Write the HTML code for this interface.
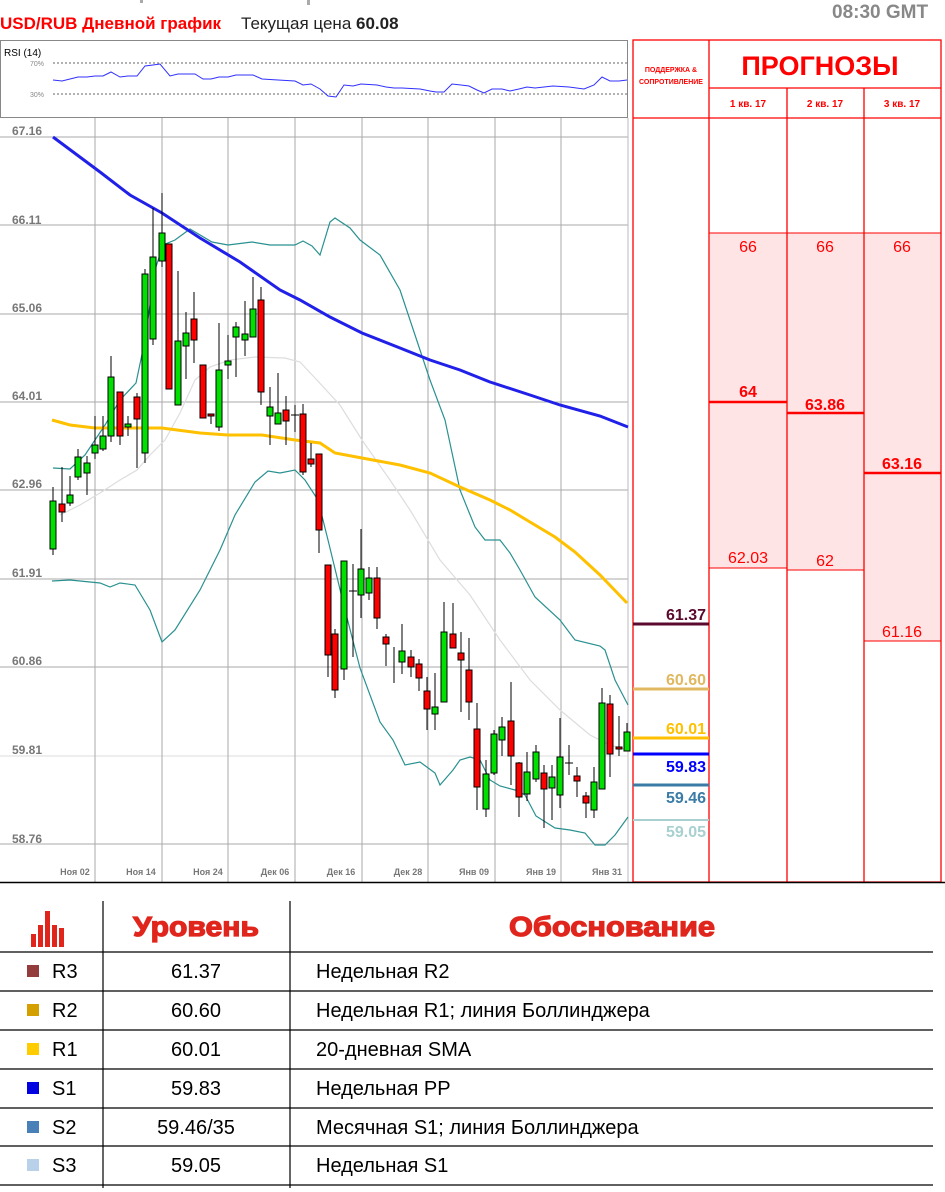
<!DOCTYPE html>
<html><head><meta charset="utf-8"><style>
*{margin:0;padding:0;box-sizing:border-box}
body{width:945px;height:1192px;background:#fff;font-family:"Liberation Sans","DejaVu Sans",sans-serif;position:relative;overflow:hidden}
.a{position:absolute}
</style></head><body>
<div class="a" style="left:832px;top:2px;font-size:19px;font-weight:bold;color:#888">08:30 GMT</div>
<div class="a" style="left:0;top:14px;font-size:17px;white-space:nowrap"><span style="color:#f00;font-weight:bold">USD/RUB Дневной график</span><span style="color:#222;margin-left:20px">Текущая цена <b>60.08</b></span></div>
<svg class="a" style="left:0;top:0" width="945" height="1192" xmlns="http://www.w3.org/2000/svg" font-family="Liberation Sans, sans-serif">
<rect x="140" y="0" width="3" height="3" fill="#aaa"/><rect x="307" y="0" width="3" height="5" fill="#aaa"/>
<rect x="0.5" y="40.5" width="627" height="77" fill="#fff" stroke="#888"/>
<text x="4" y="56" font-size="10" fill="#000">RSI (14)</text>
<text x="30" y="66" font-size="7" fill="#888">70%</text><text x="30" y="97" font-size="7" fill="#888">30%</text>
<line x1="53" y1="63" x2="627" y2="63" stroke="#666" stroke-dasharray="2,2"/>
<line x1="53" y1="94" x2="627" y2="94" stroke="#666" stroke-dasharray="2,2"/>
<polyline fill="none" stroke="#3030ff" stroke-width="1" points="53,80 62,81 70,79 78,77 87,77 95,76 103,76 111,72 120,77 128,76 137,76 145,66 153,65 160,64 170,76 178,74 195,74 203,79 211,79 219,77 228,77 236,75 245,75 253,75 262,79 278,80 295,81 303,85 311,84 320,89 328,96 336,97 344,85 353,86 361,84 377,85 386,87 394,88 402,88 420,89 430,91 436,92 444,92 452,84 461,85 469,86 477,90 484,93 492,89 502,89 510,91 519,89 527,87 535,88 553,86 569,87 584,89 594,85 602,77 610,81 619,81 627,80"/>
<g stroke="#aaa" stroke-width="1">
<line x1="0" y1="137" x2="628" y2="137"/><line x1="0" y1="225" x2="628" y2="225"/><line x1="0" y1="314" x2="628" y2="314"/><line x1="0" y1="402" x2="628" y2="402"/><line x1="0" y1="490" x2="628" y2="490"/><line x1="0" y1="579" x2="628" y2="579"/><line x1="0" y1="667" x2="628" y2="667"/><line x1="0" y1="756" x2="628" y2="756" stroke="#ddd"/><line x1="0" y1="844" x2="628" y2="844"/>
<line x1="95" y1="118" x2="95" y2="882"/><line x1="162" y1="118" x2="162" y2="882"/><line x1="228" y1="118" x2="228" y2="882"/><line x1="295" y1="118" x2="295" y2="882"/><line x1="362" y1="118" x2="362" y2="882"/><line x1="428" y1="118" x2="428" y2="882"/><line x1="495" y1="118" x2="495" y2="882"/><line x1="561" y1="118" x2="561" y2="882"/><line x1="628" y1="118" x2="628" y2="882" stroke="#bbb"/>
</g>
<g font-size="12" font-weight="bold" fill="#777">
<text x="12" y="135">67.16</text><text x="12" y="224">66.11</text><text x="12" y="312">65.06</text><text x="12" y="400">64.01</text><text x="12" y="488">62.96</text><text x="12" y="577">61.91</text><text x="12" y="665">60.86</text><text x="12" y="754">59.81</text><text x="12" y="843">58.76</text>
</g>
<g font-size="9" font-weight="bold" fill="#777" text-anchor="middle">
<text x="75" y="875">Ноя 02</text><text x="141" y="875">Ноя 14</text><text x="208" y="875">Ноя 24</text><text x="275" y="875">Дек 06</text><text x="341" y="875">Дек 16</text><text x="408" y="875">Дек 28</text><text x="474" y="875">Янв 09</text><text x="541" y="875">Янв 19</text><text x="607" y="875">Янв 31</text>
</g>
<polyline fill="none" stroke="#ddd" stroke-width="1.2" points="60,515 80,505 100,493 120,480 137,470 150,455 165,440 180,413 195,380 210,367 230,360 255,357 285,358 300,362 315,378 340,405 362,440 390,480 410,510 440,560 470,595 500,640 530,680 560,710 590,735 610,745 628,750"/>
<polyline fill="none" stroke="#2a9090" stroke-width="1.2" points="53,468 70,469 85,455 105,425 120,400 136,383 145,340 155,270 163,245 175,240 190,229 212,242 228,245 252,242 270,245 295,245 303,241 312,246 320,255 330,222 335,218 350,228 360,240 380,255 400,290 410,320 420,350 430,380 445,420 460,490 475,527 485,540 500,540 510,553 520,570 535,597 560,620 575,640 600,646 605,650 615,680 628,705"/>
<polyline fill="none" stroke="#2a9090" stroke-width="1.2" points="52,581 70,580 100,583 110,587 120,583 135,585 150,610 162,642 175,630 200,590 220,550 235,515 255,482 268,471 280,473 295,470 305,480 318,500 328,540 345,610 360,668 380,722 393,740 405,765 420,762 435,773 440,785 453,770 460,760 470,757 480,760 490,780 500,786 515,790 525,795 536,816 555,828 570,830 585,833 595,845 605,845 615,835 628,817"/>
<polyline fill="none" stroke="#ffc000" stroke-width="3" points="52,420 70,425 95,428 128,428 162,428 200,433 228,435 262,435 295,440 320,443 335,453 362,458 400,465 430,473 460,487 490,500 510,510 530,522 555,537 575,552 600,575 627,603"/>
<polyline fill="none" stroke="#2020e8" stroke-width="3" points="53,137 100,172 130,195 162,213 200,238 240,262 280,290 300,300 330,317 362,333 400,348 430,360 460,370 490,382 530,395 560,405 600,416 628,427"/>
<g stroke="#000" stroke-width="1">
<path d="M53 487V555M62 467V522M70 476V506M78 449V480M87 456V495M95 416V459M103 416V451M111 356V442M120 392V445M128 416V436M137 393V468M145 269V463M153 208V345M162 193V267M169 244V389M178 271V405M186 312V379M194 292V363M203 365V418M211 414V424M219 323V431M228 335V379M236 322V377M245 301V356M253 277V337M261 287V405M270 387V445M278 373V424M286 396V445M295 405V432M303 404V475M311 443V467M319 454V553M328 565V677M335 629V698M344 561V680M353 564V657M361 529V618M369 567V600M377 567V629M386 634V666M394 647V683M402 624V674M411 650V677M419 659V691M427 677V730M435 673V730M444 602V702M453 603V648M461 632V712M469 638V720M477 703V810M486 760V817M494 730V775M502 717V756M511 682V785M519 762V817M527 752V801M536 745V782M544 765V828M552 765V820M560 718V808M569 745V775M577 767V797M586 792V818M594 767V818M602 688V789M610 695V777M619 716V756M627 723V751"/>
<path d="M291 415H299M349 591H357M565 763H573" />
</g>
<g stroke="#000" stroke-width="1" fill="#00e000">
<rect x="50" y="501" width="6" height="48"/><rect x="67" y="495" width="6" height="8"/><rect x="75" y="457" width="6" height="20"/><rect x="84" y="463" width="6" height="10"/><rect x="92" y="445" width="6" height="8"/><rect x="100" y="436" width="6" height="13"/><rect x="108" y="377" width="6" height="59"/><rect x="125" y="424" width="6" height="3"/><rect x="142" y="274" width="6" height="179"/><rect x="150" y="257" width="6" height="82"/><rect x="159" y="233" width="6" height="28"/><rect x="175" y="341" width="6" height="64"/><rect x="183" y="333" width="6" height="13"/><rect x="216" y="370" width="6" height="57"/><rect x="225" y="361" width="6" height="4"/><rect x="233" y="327" width="6" height="10"/><rect x="242" y="334" width="6" height="6"/><rect x="250" y="309" width="6" height="28"/><rect x="267" y="407" width="6" height="9"/><rect x="275" y="413" width="6" height="11"/><rect x="341" y="561" width="6" height="108"/><rect x="358" y="569" width="6" height="26"/><rect x="366" y="578" width="6" height="15"/><rect x="399" y="651" width="6" height="11"/><rect x="432" y="707" width="6" height="7"/><rect x="441" y="632" width="6" height="70"/><rect x="483" y="774" width="6" height="35"/><rect x="491" y="734" width="6" height="39"/><rect x="499" y="727" width="6" height="13"/><rect x="524" y="772" width="6" height="22"/><rect x="533" y="752" width="6" height="27"/><rect x="549" y="777" width="6" height="11"/><rect x="557" y="757" width="6" height="38"/><rect x="591" y="782" width="6" height="28"/><rect x="599" y="703" width="6" height="86"/><rect x="624" y="732" width="6" height="19"/>
</g>
<g stroke="#000" stroke-width="1" fill="#f00">
<rect x="59" y="504" width="6" height="8"/><rect x="117" y="392" width="6" height="44"/><rect x="134" y="397" width="6" height="22"/><rect x="166" y="244" width="6" height="145"/><rect x="191" y="319" width="6" height="21"/><rect x="200" y="365" width="6" height="53"/><rect x="208" y="414" width="6" height="2"/><rect x="258" y="300" width="6" height="92"/><rect x="283" y="410" width="6" height="11"/><rect x="300" y="414" width="6" height="58"/><rect x="308" y="459" width="6" height="5"/><rect x="316" y="454" width="6" height="76"/><rect x="325" y="565" width="6" height="90"/><rect x="332" y="634" width="6" height="56"/><rect x="374" y="578" width="6" height="40"/><rect x="383" y="637" width="6" height="7"/><rect x="408" y="657" width="6" height="10"/><rect x="416" y="664" width="6" height="14"/><rect x="424" y="691" width="6" height="18"/><rect x="450" y="634" width="6" height="14"/><rect x="458" y="653" width="6" height="7"/><rect x="466" y="670" width="6" height="32"/><rect x="474" y="729" width="6" height="58"/><rect x="508" y="721" width="6" height="35"/><rect x="516" y="763" width="6" height="34"/><rect x="541" y="773" width="6" height="16"/><rect x="574" y="776" width="6" height="5"/><rect x="583" y="796" width="6" height="7"/><rect x="607" y="704" width="6" height="50"/><rect x="616" y="747" width="6" height="2"/>
</g>
<rect x="710" y="233" width="77" height="335" fill="#ffe4e6"/>
<rect x="787" y="233" width="77" height="337" fill="#ffe4e6"/>
<rect x="864" y="233" width="77" height="408" fill="#ffe4e6"/>
<g stroke="#f00" stroke-width="1.3" fill="none">
<rect x="633" y="40" width="308" height="842"/>
<line x1="709" y1="40" x2="709" y2="882"/><line x1="787" y1="88" x2="787" y2="882"/><line x1="864" y1="88" x2="864" y2="882"/>
<line x1="709" y1="88" x2="941" y2="88"/><line x1="633" y1="118" x2="941" y2="118"/>
<line x1="709" y1="233" x2="941" y2="233" stroke-width="1"/>
<line x1="709" y1="568" x2="787" y2="568" stroke-width="1"/><line x1="787" y1="570" x2="864" y2="570" stroke-width="1"/><line x1="864" y1="641" x2="941" y2="641" stroke-width="1"/>
<line x1="709" y1="402" x2="787" y2="402" stroke-width="2.5"/><line x1="787" y1="413" x2="864" y2="413" stroke-width="2.5"/><line x1="864" y1="473" x2="941" y2="473" stroke-width="2.5"/>
</g>
<g fill="#f00" text-anchor="middle">
<text x="671" y="72" font-size="7" font-weight="bold">ПОДДЕРЖКА &amp;</text>
<text x="671" y="84" font-size="7" font-weight="bold">СОПРОТИВЛЕНИЕ</text>
<text x="820" y="75" font-size="27" font-weight="bold">ПРОГНОЗЫ</text>
<text x="748" y="107" font-size="10" font-weight="bold">1 кв. 17</text><text x="825" y="107" font-size="10" font-weight="bold">2 кв. 17</text><text x="902" y="107" font-size="10" font-weight="bold">3 кв. 17</text>
<text x="748" y="252" font-size="16">66</text><text x="825" y="252" font-size="16">66</text><text x="902" y="252" font-size="16">66</text>
<text x="748" y="397" font-size="16" font-weight="bold">64</text><text x="825" y="410" font-size="16" font-weight="bold">63.86</text><text x="902" y="469" font-size="16" font-weight="bold">63.16</text>
<text x="748" y="563" font-size="16">62.03</text><text x="825" y="566" font-size="16">62</text><text x="902" y="637" font-size="16">61.16</text>
</g>
<g stroke-width="3">
<line x1="633" y1="624" x2="709" y2="624" stroke="#5a0a2e"/><line x1="633" y1="689" x2="709" y2="689" stroke="#e0b860"/><line x1="633" y1="738" x2="709" y2="738" stroke="#ffc000"/><line x1="633" y1="754" x2="709" y2="754" stroke="#0000ff"/><line x1="633" y1="785" x2="709" y2="785" stroke="#3a7ca5"/><line x1="633" y1="820" x2="709" y2="820" stroke="#a8d0d0" stroke-width="2"/>
</g>
<g font-size="16" font-weight="bold" text-anchor="end">
<text x="706" y="620" fill="#5a0a2e">61.37</text><text x="706" y="685" fill="#e0b860">60.60</text><text x="706" y="734" fill="#ffc000">60.01</text><text x="706" y="772" fill="#0000ff">59.83</text><text x="706" y="803" fill="#3a7ca5">59.46</text><text x="706" y="837" fill="#a8d0d0">59.05</text>
</g>
<line x1="0" y1="882.5" x2="945" y2="882.5" stroke="#000" stroke-width="1.5"/>
<g stroke="#000" stroke-width="1.2">
<line x1="103" y1="901" x2="103" y2="1188"/><line x1="290" y1="901" x2="290" y2="1188"/>
<line x1="0" y1="952" x2="933" y2="952"/><line x1="0" y1="991" x2="933" y2="991"/><line x1="0" y1="1030" x2="933" y2="1030"/><line x1="0" y1="1069" x2="933" y2="1069"/><line x1="0" y1="1108" x2="933" y2="1108"/><line x1="0" y1="1146" x2="933" y2="1146"/><line x1="0" y1="1185" x2="933" y2="1185"/>
</g>
<g fill="#e0261c"><rect x="31" y="934" width="5" height="13"/><rect x="38" y="925" width="5" height="22"/><rect x="45" y="911" width="5" height="36"/><rect x="52" y="925" width="5" height="22"/><rect x="59" y="928" width="5" height="19"/></g>
<g font-size="28" font-weight="bold" fill="#e0261c" stroke="#e0261c" stroke-width="1.2" text-anchor="middle"><text x="196" y="936" textLength="126" lengthAdjust="spacingAndGlyphs">Уровень</text><text x="612" y="936" textLength="206" lengthAdjust="spacingAndGlyphs">Обоснование</text></g>
<rect x="27" y="965" width="12" height="12" fill="#943c3c"/><rect x="27" y="1004" width="12" height="12" fill="#d4a000"/><rect x="27" y="1043" width="12" height="12" fill="#ffcc00"/><rect x="27" y="1082" width="12" height="12" fill="#0000e0"/><rect x="27" y="1121" width="12" height="12" fill="#4a80b8"/><rect x="27" y="1159" width="12" height="12" fill="#b8d0e8"/>
<g font-size="20" fill="#000">
<text x="52" y="978">R3</text><text x="52" y="1017">R2</text><text x="52" y="1056">R1</text><text x="52" y="1095">S1</text><text x="52" y="1134">S2</text><text x="52" y="1172">S3</text>
<g text-anchor="middle"><text x="196" y="978">61.37</text><text x="196" y="1017">60.60</text><text x="196" y="1056">60.01</text><text x="196" y="1095">59.83</text><text x="196" y="1134">59.46/35</text><text x="196" y="1172">59.05</text></g>
<text x="316" y="978">Недельная R2</text><text x="316" y="1017">Недельная R1; линия Боллинджера</text><text x="316" y="1056">20-дневная SMA</text><text x="316" y="1095">Недельная PP</text><text x="316" y="1134">Месячная S1; линия Боллинджера</text><text x="316" y="1172">Недельная S1</text>
</g>
</svg>
</body></html>
